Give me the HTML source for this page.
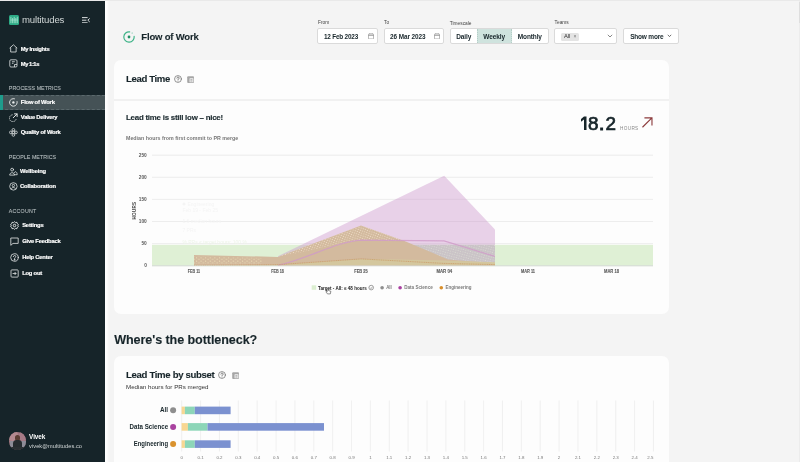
<!DOCTYPE html>
<html>
<head>
<meta charset="utf-8">
<title>Flow of Work</title>
<style>
*{box-sizing:border-box;margin:0;padding:0}
html,body{width:800px;height:462px;overflow:hidden;background:#f4f4f4;font-family:"Liberation Sans",sans-serif;color:#17252a}
.abs{position:absolute}
#wrap{position:absolute;left:0;top:0;width:800px;height:462px;will-change:transform}
#topline{position:absolute;left:0;top:0;width:800px;height:1px;background:#e9e9e9;z-index:50}
#side{position:absolute;left:0;top:0;width:105px;height:462px;background:#162429;color:#fff}
#sidegap{position:absolute;left:105px;top:0;width:4px;height:462px;background:linear-gradient(90deg,#fefefe 0,#fdfdfd 45%,#f4f4f4 100%)}
.nav{position:absolute;left:0;width:105px;height:15px}
.nav span{position:absolute;left:20.8px;top:0.3px;line-height:15px;font-size:5.8px;font-weight:bold;white-space:nowrap;color:#fff;letter-spacing:-.2px;-webkit-text-stroke:.18px #fff}
.nav svg{position:absolute;left:8.8px;top:3.1px;width:8.8px;height:8.8px}
.nav.acc svg{left:9.5px;top:3px;width:9px;height:9px}
.sec{position:absolute;left:8.8px;font-size:5.3px;color:#b2babc;-webkit-text-stroke:.1px #b2babc;letter-spacing:.06px;white-space:nowrap;line-height:8px}
.t{position:absolute;white-space:nowrap;line-height:1}
.card{position:absolute;background:#fdfdfd;border-radius:7px}
.lbl{position:absolute;font-size:4.8px;color:#444;white-space:nowrap;line-height:6px}
.box{position:absolute;background:#fff;border:.8px solid #dadada;border-radius:2px;height:15.6px;top:28.3px}
#h-flow,#h-lead,#h-subset,#h-where,#h-nice{-webkit-text-stroke:.12px #17252a}
</style>
</head>
<body>
<div id="wrap">
<div id="main">
  <!-- page header -->
  <svg class="abs" style="left:123px;top:30.5px" width="12" height="12" viewBox="0 0 13 13" fill="none" stroke="#3bb286" stroke-width="1.25" stroke-linecap="round">
    <path d="M7.2 0.95 A5.6 5.6 0 1 0 12.05 5.8"/><circle cx="9.9" cy="2.2" r=".55" fill="#3bb286" stroke="none"/><circle cx="6.5" cy="6.5" r="1.5" fill="#1f8f63" stroke="none"/>
  </svg>
  <div class="t" id="h-flow" style="left:141.3px;top:31.3px;font-size:9.5px;font-weight:bold;line-height:12px;letter-spacing:-.18px">Flow of Work</div>

  <div class="lbl" style="left:318px;top:20.2px">From</div>
  <div class="box" style="left:317.4px;width:60.3px"></div>
  <div class="t" style="left:324px;top:32.9px;font-size:6.4px;font-weight:bold;line-height:7px;letter-spacing:-.2px">12 Feb 2023</div>
  <svg class="abs" style="left:368px;top:32.8px" width="6" height="6.4" viewBox="0 0 6 6.4" fill="none" stroke="#7d7d7d" stroke-width=".6"><rect x=".4" y="1" width="5.2" height="5" rx=".7"/><path d="M.4 2.5 H5.6 M1.8 .3 V1.4 M4.2 .3 V1.4"/></svg>

  <div class="lbl" style="left:384px;top:20.2px">To</div>
  <div class="box" style="left:383.5px;width:60.4px"></div>
  <div class="t" style="left:390px;top:32.9px;font-size:6.4px;font-weight:bold;line-height:7px;letter-spacing:-.07px">26 Mar 2023</div>
  <svg class="abs" style="left:434.1px;top:32.8px" width="6" height="6.4" viewBox="0 0 6 6.4" fill="none" stroke="#7d7d7d" stroke-width=".6"><rect x=".4" y="1" width="5.2" height="5" rx=".7"/><path d="M.4 2.5 H5.6 M1.8 .3 V1.4 M4.2 .3 V1.4"/></svg>

  <div class="lbl" style="left:449.8px;top:21px">Timescale</div>
  <div class="box" style="left:449.5px;width:99px;overflow:hidden">
    <div class="abs" style="left:26.2px;top:0;width:35.3px;height:14px;background:#cfe3de;border-left:.8px dotted #b5cfc8;border-right:.8px dotted #b5cfc8"></div>
  </div>
  <div class="t" style="left:456.2px;top:33.2px;font-size:6.5px;font-weight:bold;line-height:7px;letter-spacing:-.1px">Daily</div>
  <div class="t" style="left:483.3px;top:33.2px;font-size:6.5px;font-weight:bold;line-height:7px;letter-spacing:-.1px">Weekly</div>
  <div class="t" style="left:517.8px;top:33.2px;font-size:6.5px;font-weight:bold;line-height:7px;letter-spacing:-.12px">Monthly</div>

  <div class="lbl" style="left:554.6px;top:20px">Teams</div>
  <div class="box" style="left:554.1px;width:63px;height:16px"></div>
  <div class="abs" style="left:561px;top:32.5px;width:18px;height:8.4px;background:#e4e4e4;border-radius:1.5px"></div>
  <div class="t" style="left:563.9px;top:33.2px;font-size:5.8px;line-height:7px;color:#333">All</div>
  <div class="t" style="left:573.6px;top:33.2px;font-size:5px;line-height:7px;color:#777">×</div>
  <svg class="abs" style="left:607.3px;top:34.3px" width="6" height="4" viewBox="0 0 6 4" fill="none" stroke="#555" stroke-width=".7"><path d="M.8 .8 L3 3 L5.2 .8"/></svg>

  <div class="box" style="left:623.2px;width:56.2px;height:15.3px"></div>
  <div class="t" style="left:630.2px;top:33.2px;font-size:6.5px;font-weight:bold;line-height:7px;letter-spacing:-.2px">Show more</div>
  <svg class="abs" style="left:667.2px;top:34.4px" width="5" height="4" viewBox="0 0 5 4" fill="none" stroke="#333" stroke-width=".7"><path d="M.8 .8 L2.5 2.6 L4.2 .8"/></svg>

  <!-- Lead time card -->
  <div class="card" id="card1" style="left:114px;top:59.5px;width:555px;height:254px">
    <div class="abs" style="left:0;top:39.6px;width:555px;height:1.5px;background:#f1f1f1"></div>
  </div>

  <!-- chart -->
  <svg class="abs" id="chart" style="left:0;top:0" width="800" height="462" viewBox="0 0 800 462">
    <defs>
      <pattern id="dotsL" width="2.3" height="2.3" patternUnits="userSpaceOnUse" patternTransform="rotate(20)"><circle cx="1" cy="1" r=".5" fill="#f7e9d6"/></pattern>
      <pattern id="dotsY" width="4.6" height="3.4" patternUnits="userSpaceOnUse"><circle cx="1" cy="1" r=".5" fill="#f5efbf"/><circle cx="3.3" cy="2.7" r=".5" fill="#f5efbf"/></pattern>
      <pattern id="dotsG" width="2.4" height="2.4" patternUnits="userSpaceOnUse" patternTransform="rotate(15)"><circle cx="1" cy="1" r=".5" fill="#e4ead9"/></pattern>
      <clipPath id="clipData"><rect x="152" y="150" width="343" height="115.4"/></clipPath>
    </defs>
    <!-- gridlines -->
    <g stroke="#ebebeb" stroke-width=".9">
      <line x1="152" y1="155.2" x2="653" y2="155.2"/><line x1="152" y1="177.3" x2="653" y2="177.3"/>
      <line x1="152" y1="199.4" x2="653" y2="199.4"/><line x1="152" y1="221.5" x2="653" y2="221.5"/>
      <line x1="152" y1="243.6" x2="653" y2="243.6"/>
    </g>
    <!-- target band -->
    <rect x="152" y="244.8" width="501" height="20.5" fill="#dff0d5"/>
    <rect x="152" y="265.2" width="501" height="1.1" fill="#d3dbd1"/>
    <g clip-path="url(#clipData)">
      <!-- data science band -->
      <polygon points="278,256.2 444.2,175.8 495,229.4 495,265.4 278,265.4" fill="#c98fc9" fill-opacity=".4"/>
      <!-- all band (gray dotted) right -->
      <polygon points="395,244.7 495,244.7 495,265.4 395,265.4" fill="#bdbdbd" fill-opacity=".45"/>
      <polygon points="395,244.7 495,244.7 495,265.4 395,265.4" fill="url(#dotsG)" fill-opacity=".8"/>
      <!-- engineering band -->
      <polygon points="194,254.9 278,256.9 361,225.4 404.5,240.9 448,259.4 495,263.4 495,265.4 194,265.4" fill="#d3ba9e"/>
      <polygon points="278,256.9 300,248.4 361,225.4 404.5,240.9 361,240.1 300,252.4" fill="url(#dotsL)"/>
      <polygon points="194,256.4 262,257.9 262,263.9 194,263.9" fill="url(#dotsY)" fill-opacity=".9"/>
      <!-- lower olive strip -->
      <polygon points="194,265.4 278,264.7 361,258.9 400,259.6 444,260.4 495,262.2 495,265.4" fill="#d4c79e"/>
      <!-- lines -->
      <path d="M278,265.4 C310,258 335,242 361,240.1 L444,240.9 L495,256.4" fill="none" stroke="#cf9ac8" stroke-width="1.2" stroke-opacity=".8"/>
      <polyline points="194,265.4 278,264.7 361,258.9 444,263.4 495,264.6" fill="none" stroke="#c9955f" stroke-width=".9" stroke-opacity=".75" stroke-dasharray="1.2 .6"/>
    </g>
    <!-- faded tooltip ghost -->
    <g font-family="Liberation Sans, sans-serif" font-size="5" fill="#f4f4f4">
      <circle cx="184" cy="204" r="1.6"/><text x="187.5" y="205.8">Engineering</text><text x="182.4" y="211.8">Feb 19 - Feb 25</text>
      <text x="182.4" y="222.8">1.6 median hours</text><text x="182.4" y="232.2">7 PRs</text><text x="182.4" y="244" fill="#edf4e8">% PRs ≤ target hours: 100 %</text>
    </g>
    <!-- y labels -->
    <g id="ylab" font-family="Liberation Sans, sans-serif" font-size="4.8" font-weight="bold" fill="#5a5a5a" text-anchor="end">
      <text x="146.8" y="156.9">250</text><text x="146.8" y="179">200</text><text x="146.8" y="201.1">150</text>
      <text x="146.8" y="223.2">100</text><text x="146.8" y="245.4">50</text><text x="146.8" y="267.4">0</text>
    </g>
    <text font-family="Liberation Sans, sans-serif" font-size="4.6" font-weight="bold" fill="#444" text-anchor="middle" letter-spacing=".2" transform="translate(135.6 210.6) rotate(-90)">HOURS</text>
    <!-- x labels -->
    <g id="xlab" font-family="Liberation Sans, sans-serif" font-size="4.7" font-weight="bold" fill="#5c5c5c" stroke="#5c5c5c" stroke-width=".12" text-anchor="middle">
      <text x="193.9" y="273.2" textLength="12.2" lengthAdjust="spacingAndGlyphs">FEB 11</text><text x="277.5" y="273.2" textLength="12.6" lengthAdjust="spacingAndGlyphs">FEB 18</text><text x="361" y="273.2" textLength="13.5" lengthAdjust="spacingAndGlyphs">FEB 25</text>
      <text x="444.3" y="273.2" textLength="15.8" lengthAdjust="spacingAndGlyphs">MAR 04</text><text x="528" y="273.2" textLength="14" lengthAdjust="spacingAndGlyphs">MAR 11</text><text x="611.5" y="273.2" textLength="15" lengthAdjust="spacingAndGlyphs">MAR 18</text>
    </g>
    <!-- legend -->
    <g id="legend" font-family="Liberation Sans, sans-serif" font-weight="bold">
    <rect x="311.7" y="285.3" width="4.5" height="4.5" fill="#dbeed0"/>
    <text x="318" y="289.6" font-size="4.9" fill="#222" textLength="48.8" lengthAdjust="spacingAndGlyphs">Target - All: ≤ 48 hours</text>
    <circle cx="371.2" cy="287.6" r="2.3" fill="none" stroke="#555" stroke-width=".55"/>
    <path d="M370.1 287.7 L371 288.6 L372.5 286.8" fill="none" stroke="#555" stroke-width=".5"/>
    <circle cx="382.1" cy="287.7" r="1.8" fill="#8e8e8e"/>
    <text x="386.2" y="289.4" font-size="4.7" fill="#7a7a7a" textLength="5.6" lengthAdjust="spacingAndGlyphs">All</text>
    <circle cx="400.1" cy="287.7" r="1.8" fill="#a93fa0"/>
    <text x="404.2" y="289.4" font-size="4.7" fill="#7a7a7a" textLength="28.6" lengthAdjust="spacingAndGlyphs">Data Science</text>
    <circle cx="441.3" cy="287.7" r="1.8" fill="#d98f2b"/>
    <text x="445.6" y="289.4" font-size="4.7" fill="#7a7a7a" textLength="25.9" lengthAdjust="spacingAndGlyphs">Engineering</text>
    </g>
    <!-- cursor -->
    <path d="M327.2 288.6 v3.2 l-.8 -.5 -.5 .6 1.6 2 h2.8 l.6 -2.6 -2.4 -.8 v-1.9 z" fill="#fff" stroke="#222" stroke-width=".5" stroke-linejoin="round"/>
  </svg>
  <div class="t" id="h-lead" style="left:126px;top:72.7px;font-size:9.6px;font-weight:bold;line-height:12px;letter-spacing:-.37px">Lead Time</div>
  <svg class="abs" style="left:173.5px;top:74.9px" width="8" height="8" viewBox="0 0 8 8" fill="none" stroke="#6a6a6a" stroke-width=".7" stroke-linecap="round"><circle cx="4" cy="4" r="3.45"/><path d="M2.9 3.1 C2.9 1.7 5.1 1.7 5.1 3.05 C5.1 3.9 4 3.9 4 4.9" stroke="#4a4a4a" stroke-width=".75"/><circle cx="4" cy="6.1" r=".45" fill="#4a4a4a" stroke="none"/></svg>
  <svg class="abs" style="left:187px;top:75.5px" width="7.2" height="7.2" viewBox="0 0 7 7"><rect x=".2" y=".2" width="6.6" height="6.6" rx=".9" fill="#a6a6a6"/><rect x="2.5" y="2.2" width="3.7" height="4" rx=".3" fill="#f3f3f3"/><path d="M3.3 3.6 H5.3 M3.3 4.9 H5.3" stroke="#777" stroke-width=".55" fill="none"/></svg>

  <div class="t" id="h-nice" style="left:126px;top:113.2px;font-size:7.9px;font-weight:bold;line-height:9px;letter-spacing:-.235px">Lead time is still low – nice!</div>
  <div class="t" id="h-med" style="left:126px;top:134.5px;font-size:5.3px;font-weight:bold;line-height:6px;color:#777">Median hours from first commit to PR merge</div>

  <svg class="abs" style="left:580px;top:115px" width="8" height="16" viewBox="580 115 8 16"><path d="M584 116.5 H586.5 V130.1 H584 V119.6 L581 121.7 V119.1 Z" fill="#17252a"/></svg>
  <div class="t" id="h-big" style="left:0;top:112.8px;font-size:18.9px;line-height:22px;-webkit-text-stroke:.7px #17252a"><span class="abs" style="left:587.9px">8</span><span class="abs" style="left:599.1px;-webkit-text-stroke:1.1px #17252a">.</span><span class="abs" style="left:605.6px">2</span></div>
  <div class="t" style="left:620px;top:126.3px;font-size:4.7px;line-height:5px;color:#8a8a8a;letter-spacing:.32px">HOURS</div>
  <svg class="abs" style="left:642.1px;top:117.3px" width="11.2" height="11.2" viewBox="0 0 12 12" fill="none" stroke="#8c3b3c" stroke-width="1.2"><path d="M.5 11 L10.6 1 M2.6 1 H10.7 V9"/></svg>

  <!-- bottleneck -->
  <div class="t" id="h-where" style="left:114.2px;top:332.6px;font-size:12.6px;font-weight:bold;line-height:15px;letter-spacing:-.09px">Where's the bottleneck?</div>
  <div class="card" id="card2" style="left:114px;top:356.3px;width:554.5px;height:130px"></div>
  <div class="t" id="h-subset" style="left:126px;top:369.2px;font-size:9.6px;font-weight:bold;line-height:12px;letter-spacing:-.33px">Lead Time by subset</div>
  <svg class="abs" style="left:218px;top:371.4px" width="8" height="8" viewBox="0 0 8 8" fill="none" stroke="#6a6a6a" stroke-width=".7" stroke-linecap="round"><circle cx="4" cy="4" r="3.45"/><path d="M2.9 3.1 C2.9 1.7 5.1 1.7 5.1 3.05 C5.1 3.9 4 3.9 4 4.9" stroke="#4a4a4a" stroke-width=".75"/><circle cx="4" cy="6.1" r=".45" fill="#4a4a4a" stroke="none"/></svg>
  <svg class="abs" style="left:231.6px;top:371.9px" width="7.2" height="7.2" viewBox="0 0 7 7"><rect x=".2" y=".2" width="6.6" height="6.6" rx=".9" fill="#a6a6a6"/><rect x="2.5" y="2.2" width="3.7" height="4" rx=".3" fill="#f3f3f3"/><path d="M3.3 3.6 H5.3 M3.3 4.9 H5.3" stroke="#777" stroke-width=".55" fill="none"/></svg>
  <div class="t" id="h-prs" style="left:126px;top:383.4px;font-size:6.2px;line-height:8px;color:#333">Median hours for PRs merged</div>
  <svg class="abs" id="bars" style="left:0;top:0" width="800" height="462" viewBox="0 0 800 462">
    <g stroke="#ececec" stroke-width=".8"><line x1="181.70" y1="400.5" x2="181.70" y2="451.5"/><line x1="200.57" y1="400.5" x2="200.57" y2="451.5"/><line x1="219.44" y1="400.5" x2="219.44" y2="451.5"/><line x1="238.31" y1="400.5" x2="238.31" y2="451.5"/><line x1="257.18" y1="400.5" x2="257.18" y2="451.5"/><line x1="276.05" y1="400.5" x2="276.05" y2="451.5"/><line x1="294.92" y1="400.5" x2="294.92" y2="451.5"/><line x1="313.79" y1="400.5" x2="313.79" y2="451.5"/><line x1="332.66" y1="400.5" x2="332.66" y2="451.5"/><line x1="351.53" y1="400.5" x2="351.53" y2="451.5"/><line x1="370.40" y1="400.5" x2="370.40" y2="451.5"/><line x1="389.27" y1="400.5" x2="389.27" y2="451.5"/><line x1="408.14" y1="400.5" x2="408.14" y2="451.5"/><line x1="427.01" y1="400.5" x2="427.01" y2="451.5"/><line x1="445.88" y1="400.5" x2="445.88" y2="451.5"/><line x1="464.75" y1="400.5" x2="464.75" y2="451.5"/><line x1="483.62" y1="400.5" x2="483.62" y2="451.5"/><line x1="502.49" y1="400.5" x2="502.49" y2="451.5"/><line x1="521.36" y1="400.5" x2="521.36" y2="451.5"/><line x1="540.23" y1="400.5" x2="540.23" y2="451.5"/><line x1="559.10" y1="400.5" x2="559.10" y2="451.5"/><line x1="577.97" y1="400.5" x2="577.97" y2="451.5"/><line x1="596.84" y1="400.5" x2="596.84" y2="451.5"/><line x1="615.71" y1="400.5" x2="615.71" y2="451.5"/><line x1="634.58" y1="400.5" x2="634.58" y2="451.5"/><line x1="653.45" y1="400.5" x2="653.45" y2="451.5"/></g>
    <!-- All -->
    <rect x="181.6" y="406.6" width="3.3" height="7.6" fill="#f8d792"/><rect x="184.9" y="406.6" width="9.9" height="7.6" fill="#8dd6b8"/><rect x="194.8" y="406.6" width="35.8" height="7.6" fill="#7b91d0"/>
    <!-- DS -->
    <rect x="181.6" y="423.1" width="6.3" height="7.6" fill="#f8d792"/><rect x="187.9" y="423.1" width="19.6" height="7.6" fill="#8dd6b8"/><rect x="207.5" y="423.1" width="116.5" height="7.6" fill="#7b91d0"/>
    <!-- Eng -->
    <rect x="181.6" y="440.3" width="3.3" height="7.6" fill="#f8d792"/><rect x="184.9" y="440.3" width="9.9" height="7.6" fill="#8dd6b8"/><rect x="194.8" y="440.3" width="35.8" height="7.6" fill="#7b91d0"/>
    <circle cx="173.1" cy="410.2" r="3" fill="#8e8e8e"/><circle cx="173.1" cy="426.9" r="3" fill="#a9429f"/><circle cx="173.1" cy="444" r="3" fill="#d9922e"/>
    <g font-family="Liberation Sans, sans-serif" font-size="6.3" font-weight="bold" fill="#17252a" text-anchor="end">
      <text x="168.1" y="412.4">All</text><text x="168.1" y="429.2" textLength="38.5" lengthAdjust="spacingAndGlyphs">Data Science</text><text x="168.1" y="446.3" textLength="34.4" lengthAdjust="spacingAndGlyphs">Engineering</text>
    </g>
    <g font-family="Liberation Sans, sans-serif" font-size="4.4" fill="#777" text-anchor="middle"><text x="181.70" y="459.3">0</text><text x="200.57" y="459.3">0.1</text><text x="219.44" y="459.3">0.2</text><text x="238.31" y="459.3">0.3</text><text x="257.18" y="459.3">0.4</text><text x="276.05" y="459.3">0.5</text><text x="294.92" y="459.3">0.6</text><text x="313.79" y="459.3">0.7</text><text x="332.66" y="459.3">0.8</text><text x="351.53" y="459.3">0.9</text><text x="370.40" y="459.3">1</text><text x="389.27" y="459.3">1.1</text><text x="408.14" y="459.3">1.2</text><text x="427.01" y="459.3">1.3</text><text x="445.88" y="459.3">1.4</text><text x="464.75" y="459.3">1.5</text><text x="483.62" y="459.3">1.6</text><text x="502.49" y="459.3">1.7</text><text x="521.36" y="459.3">1.8</text><text x="540.23" y="459.3">1.9</text><text x="559.10" y="459.3">2</text><text x="577.97" y="459.3">2.1</text><text x="596.84" y="459.3">2.2</text><text x="615.71" y="459.3">2.3</text><text x="634.58" y="459.3">2.4</text><text x="650.3" y="459.3">2.5</text></g>
  </svg>
</div>
<div id="side">
  <!-- logo -->
  <svg class="abs" style="left:9px;top:15px" width="10" height="10" viewBox="0 0 10 10">
    <rect x="0" y="0" width="10" height="10" rx="1.5" fill="#2dab86"/>
    <g stroke="#bfeedd" stroke-width="0.75" stroke-linecap="round" stroke-opacity=".9">
      <line x1="1.9" y1="2.2" x2="1.9" y2="7.8"/><line x1="3.6" y1="3.4" x2="3.6" y2="7.8"/>
      <line x1="5.2" y1="2.2" x2="5.2" y2="7.8"/><line x1="6.8" y1="3.4" x2="6.8" y2="7.8"/><line x1="8.3" y1="2.2" x2="8.3" y2="7.8"/>
      <line x1="1.9" y1="5" x2="8.3" y2="5" stroke-width=".5"/>
    </g>
  </svg>
  <div class="t" style="left:22px;top:13px;font-size:9.6px;line-height:13px;color:#cfd5d5;letter-spacing:-.15px">multitudes</div>
  <svg class="abs" style="left:81.8px;top:16.8px" width="8" height="6.4" viewBox="0 0 8 6.4" fill="none" stroke="#e6e9e9" stroke-width=".95">
    <line x1="0" y1="0.6" x2="5.6" y2="0.6"/><line x1="0" y1="3.2" x2="4.4" y2="3.2"/><line x1="0" y1="5.8" x2="5.6" y2="5.8"/>
    <polyline points="7.7,1.5 5.8,3.2 7.7,4.9"/>
  </svg>

  <div class="nav" style="top:41.25px">
    <svg viewBox="0 0 9 9" fill="none" stroke="#e6e9e9" stroke-width=".8" stroke-linejoin="round"><path d="M0.6 4.3 L4.5 0.8 L8.4 4.3 M1.7 3.6 V8.2 H7.3 V3.6"/></svg>
    <span style="letter-spacing:-.3px">My Insights</span>
  </div>
  <div class="nav" style="top:56.25px">
    <svg viewBox="0 0 9 9" fill="none" stroke="#e6e9e9" stroke-width=".8" stroke-linejoin="round"><rect x="0.8" y="0.8" width="7.4" height="7.4" rx="1.2"/><path d="M3 2.8 H6 M3 4.4 H4.6 M5.6 8.2 V5.6 H8.2"/></svg>
    <span style="letter-spacing:-.45px">My 1:1s</span>
  </div>

  <div class="sec" style="top:84.4px">PROCESS METRICS</div>
  <div class="abs" style="left:0;top:95.2px;width:105px;height:15px;background:#455256;border-top:1px dashed #5b696d;border-bottom:1px dashed #5b696d"></div>
  <div class="abs" style="left:0;top:95.2px;width:3.4px;height:15px;background:#1f9c8c"></div>
  <div class="nav" style="top:95.1px">
    <svg viewBox="0 0 9 9" fill="none" stroke="#e6e9e9" stroke-width=".95" stroke-linecap="round"><path d="M5.6 0.75 A3.9 3.9 0 1 0 8.3 3.6"/><circle cx="4.5" cy="4.5" r="1.2" fill="#f2f4f4" stroke="none"/></svg>
    <span>Flow of Work</span>
  </div>
  <div class="nav" style="top:110px">
    <svg viewBox="0 0 9 9" fill="none" stroke="#e6e9e9" stroke-width=".8" stroke-linecap="round"><path d="M4.4 4.8 L8.2 1 M5.6 0.9 H8.3 V3.6" stroke-width="1"/><path d="M3.2 1.9 A3.5 3.5 0 1 0 7.3 6.2" stroke-dasharray=".5 1.75" stroke-width=".95"/></svg>
    <span>Value Delivery</span>
  </div>
  <div class="nav" style="top:124.8px">
    <svg viewBox="0 0 9 9" fill="none" stroke="#e6e9e9" stroke-width=".75"><circle cx="4.5" cy="4.5" r="1.5"/><circle cx="4.5" cy="1.9" r="1.4"/><circle cx="4.5" cy="7.1" r="1.4"/><circle cx="1.9" cy="4.5" r="1.4"/><circle cx="7.1" cy="4.5" r="1.4"/></svg>
    <span>Quality of Work</span>
  </div>

  <div class="sec" style="top:153.1px">PEOPLE METRICS</div>
  <div class="nav" style="top:163.7px">
    <svg viewBox="0 0 9 9" fill="none" stroke="#e6e9e9" stroke-width=".8" stroke-linecap="round"><circle cx="3.2" cy="2.7" r="1.45"/><path d="M0.7 7.9 C0.9 5 5.3 5 5.6 7.9 Z M5.2 6 C5.8 4.6 7.2 4.4 7.8 5.6 C8.3 6.4 8.4 7.2 8.4 7.9 H5.6"/></svg>
    <span style="left:20px;letter-spacing:-.14px">Wellbeing</span>
  </div>
  <div class="nav" style="top:178.7px">
    <svg viewBox="0 0 9 9" fill="none" stroke="#e6e9e9" stroke-width=".8"><circle cx="4.5" cy="4.5" r="3.8"/><circle cx="4.5" cy="3.6" r="1.2"/><path d="M2.4 7.2 C2.8 5 6.2 5 6.6 7.2"/></svg>
    <span style="left:20px;letter-spacing:-.12px">Collaboration</span>
  </div>

  <div class="sec" style="top:206.8px;letter-spacing:.2px">ACCOUNT</div>
  <div class="nav acc" style="top:217.8px">
    <svg viewBox="0 0 9 9" fill="none" stroke="#e6e9e9" stroke-width=".95"><circle cx="4.5" cy="4.5" r="1.25"/><path d="M4.5 0.7 L5.5 1.6 L6.9 1.3 L7.3 2.7 L8.4 3.5 L7.8 4.5 L8.4 5.5 L7.3 6.3 L6.9 7.7 L5.5 7.4 L4.5 8.3 L3.5 7.4 L2.1 7.7 L1.7 6.3 L0.6 5.5 L1.2 4.5 L0.6 3.5 L1.7 2.7 L2.1 1.3 L3.5 1.6 Z" stroke-linejoin="round"/></svg>
    <span style="left:22.2px">Settings</span>
  </div>
  <div class="nav acc" style="top:233.6px">
    <svg viewBox="0 0 9 9" fill="none" stroke="#e6e9e9" stroke-width=".8" stroke-linejoin="round"><path d="M0.8 1 H8.2 V6.4 H3 L0.8 8.3 Z"/></svg>
    <span style="left:22.2px">Give Feedback</span>
  </div>
  <div class="nav acc" style="top:249.6px">
    <svg viewBox="0 0 9 9" fill="none" stroke="#e6e9e9" stroke-width=".8" stroke-linecap="round"><circle cx="4.5" cy="4.5" r="3.8"/><path d="M3.3 3.6 C3.3 2 5.8 2 5.8 3.5 C5.8 4.5 4.5 4.4 4.5 5.5"/><circle cx="4.5" cy="6.8" r=".35" fill="#e6e9e9"/></svg>
    <span style="left:22.2px">Help Center</span>
  </div>
  <div class="nav acc" style="top:265.5px">
    <svg viewBox="0 0 9 9" fill="none" stroke="#e6e9e9" stroke-width=".8" stroke-linejoin="round"><rect x="1" y="0.9" width="7.2" height="7.2" rx=".8"/><path d="M2.6 4.5 H6 M4.6 3 L6.1 4.5 L4.6 6"/></svg>
    <span style="left:22.2px">Log out</span>
  </div>

  <!-- user -->
  <div class="abs" style="left:8.8px;top:432px;width:17.6px;height:17.6px;border-radius:50%;overflow:hidden;background:#9b747c">
    <div class="abs" style="left:-2px;top:-2px;width:11px;height:11px;border-radius:50%;background:#b48a90"></div>
    <div class="abs" style="left:9px;top:0px;width:10px;height:9px;border-radius:50%;background:#a67a86"></div>
    <div class="abs" style="left:1px;top:9px;width:16px;height:6px;background:#8d8c97"></div>
    <div class="abs" style="left:6.4px;top:3.2px;width:4.8px;height:5.4px;border-radius:50%;background:#5b3d33"></div>
    <div class="abs" style="left:4.2px;top:8.2px;width:9.2px;height:11px;border-radius:3.5px 3.5px 0 0;background:#262c2f"></div>
    <div class="abs" style="left:0;top:15px;width:18px;height:4px;background:#2a3033"></div>
  </div>
  <div class="t" style="left:29.1px;top:433px;font-size:6.4px;font-weight:bold;color:#fff;line-height:8px;letter-spacing:-.08px">Vivek</div>
  <div class="t" style="left:29.1px;top:441.7px;font-size:5.6px;color:#d5dada;line-height:8px;letter-spacing:.08px">vivek@multitudes.co</div>
</div>
<div id="sidegap"></div>
<div id="topline"></div>
<div class="abs" style="left:798.5px;top:1px;width:1.5px;height:461px;background:#ececec"></div>
<div class="abs" style="left:798.5px;top:2px;width:1.5px;height:21px;background:#dedede"></div>
</div>
</body>
</html>
